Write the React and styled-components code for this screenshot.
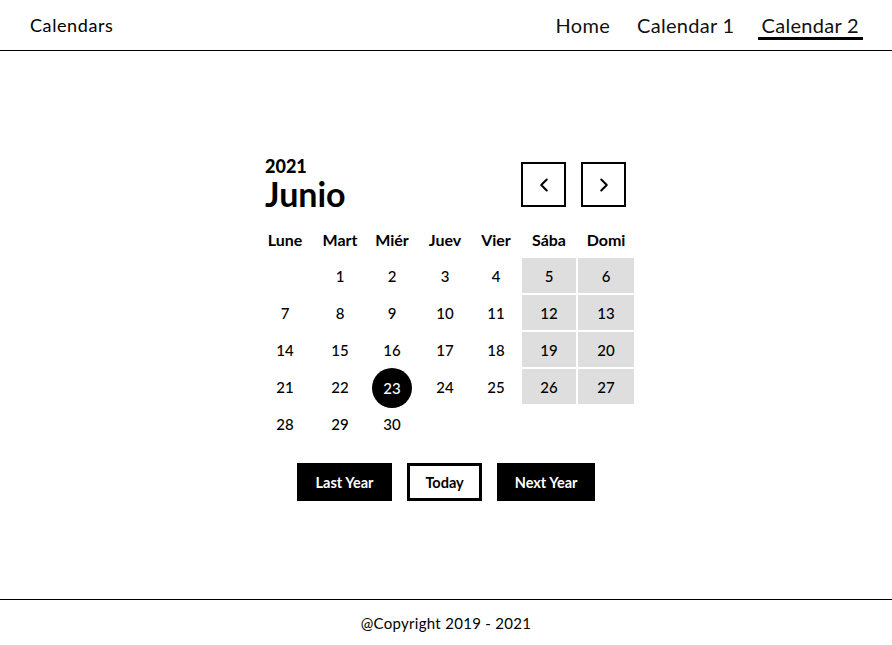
import React from 'react';
import styled, { createGlobalStyle } from 'styled-components';
import { ChevronLeft, ChevronRight } from 'lucide-react';

const GlobalStyle = createGlobalStyle`
  html, body {
    margin: 0;
    padding: 0;
  }
  body {
    font-family: Lato, "Open Sans", sans-serif;
    color: #000;
    background: #fff;
  }
`;

const Page = styled.div`
  min-height: 645px;
  display: flex;
  flex-direction: column;
`;

const Header = styled.header`
  height: 50px;
  border-bottom: 1px solid #000;
  display: flex;
  align-items: center;
  justify-content: space-between;
  padding: 0 29px 0 30px;
`;

const Brand = styled.div`
  font-size: 18px;
  letter-spacing: 0.6px;
`;

const Nav = styled.nav`
  display: flex;
  gap: 19px;
  align-items: center;
`;

const NavLink = styled.a`
  font-size: 20px;
  padding: 2px 4px 0;
  color: #111;
  text-decoration: none;
  letter-spacing: 0.3px;
  border-bottom: 3px solid ${(p) => (p.$active ? '#000' : 'transparent')};
`;

const Main = styled.main`
  flex: 1;
  display: flex;
  flex-direction: column;
  align-items: center;
  padding-top: 105px;
`;

const Calendar = styled.div`
  width: 378px;
  margin-right: 2px;
`;

const CalHead = styled.div`
  display: flex;
  justify-content: space-between;
  align-items: flex-start;
  padding: 0 8px 0 9px;
`;

const Titles = styled.div`
  display: flex;
  flex-direction: column;
`;

const Year = styled.div`
  font-size: 18px;
  font-weight: 900;
  line-height: 22px;
  margin-top: -1px;
`;

const Month = styled.div`
  font-size: 34px;
  font-weight: 700;
  line-height: 34px;
  margin-bottom: 1px;
`;

const Arrows = styled.div`
  display: flex;
  gap: 15px;
  margin-top: 6px;
`;

const ArrowBtn = styled.button`
  width: 45px;
  height: 45px;
  border: 2px solid #000;
  background: #fff;
  display: flex;
  align-items: center;
  justify-content: center;
  padding: 0;
  cursor: pointer;
`;

const cols = '58px 48px 52px 50px 48px 54px 56px';

const WeekRow = styled.div`
  display: grid;
  grid-template-columns: ${cols};
  column-gap: 2px;
  margin-top: 16px;
  height: 22px;
  align-items: center;
`;

const WeekName = styled.div`
  text-align: center;
  font-size: 16px;
  font-weight: 700;
`;

const Days = styled.div`
  display: grid;
  grid-template-columns: ${cols};
  grid-auto-rows: 35px;
  gap: 2px;
  margin-top: 8px;
`;

const Day = styled.div`
  display: flex;
  align-items: center;
  justify-content: center;
  font-size: 15px;
  font-weight: 500;
  background: ${(p) => (p.$weekend ? '#dedede' : 'transparent')};
`;

const Selected = styled.span`
  width: 40px;
  height: 40px;
  flex-shrink: 0;
  border-radius: 50%;
  background: #000;
  color: #fff;
  display: flex;
  align-items: center;
  justify-content: center;
  margin-top: 2px;
`;

const Actions = styled.div`
  display: flex;
  gap: 15px;
  margin-top: 22px;
`;

const Action = styled.button`
  height: 38px;
  padding: 0 ${(p) => p.$pad}px;
  font-family: inherit;
  font-size: 14.5px;
  font-weight: 700;
  border: 3px solid #000;
  background: ${(p) => (p.$outline ? '#fff' : '#000')};
  color: ${(p) => (p.$outline ? '#000' : '#fff')};
  cursor: pointer;
`;

const Footer = styled.footer`
  height: 45px;
  border-top: 1px solid #000;
  display: flex;
  align-items: center;
  justify-content: center;
  font-size: 15px;
  letter-spacing: 0.3px;
`;

const weekDays = ['Lune', 'Mart', 'Miér', 'Juev', 'Vier', 'Sába', 'Domi'];

const buildCells = () => {
  const cells = [null];
  for (let d = 1; d <= 30; d += 1) cells.push(d);
  return cells;
};

export default function App() {
  const cells = buildCells();
  return (
    <Page>
      <GlobalStyle />
      <Header>
        <Brand>Calendars</Brand>
        <Nav>
          <NavLink href="#">Home</NavLink>
          <NavLink href="#">Calendar 1</NavLink>
          <NavLink href="#" $active>Calendar 2</NavLink>
        </Nav>
      </Header>
      <Main>
        <Calendar>
          <CalHead>
            <Titles>
              <Year>2021</Year>
              <Month>Junio</Month>
            </Titles>
            <Arrows>
              <ArrowBtn><ChevronLeft size={22} strokeWidth={2.2} /></ArrowBtn>
              <ArrowBtn><ChevronRight size={22} strokeWidth={2.2} /></ArrowBtn>
            </Arrows>
          </CalHead>
          <WeekRow>
            {weekDays.map((w) => <WeekName key={w}>{w}</WeekName>)}
          </WeekRow>
          <Days>
            {cells.map((d, i) => {
              const col = i % 7;
              const weekend = d !== null && col >= 5;
              return (
                <Day key={i} $weekend={weekend}>
                  {d === 23 ? <Selected>{d}</Selected> : d}
                </Day>
              );
            })}
          </Days>
        </Calendar>
        <Actions>
          <Action $pad={16}>Last Year</Action>
          <Action $outline $pad={15}>Today</Action>
          <Action $pad={15}>Next Year</Action>
        </Actions>
      </Main>
      <Footer>@Copyright 2019 - 2021</Footer>
    </Page>
  );
}
